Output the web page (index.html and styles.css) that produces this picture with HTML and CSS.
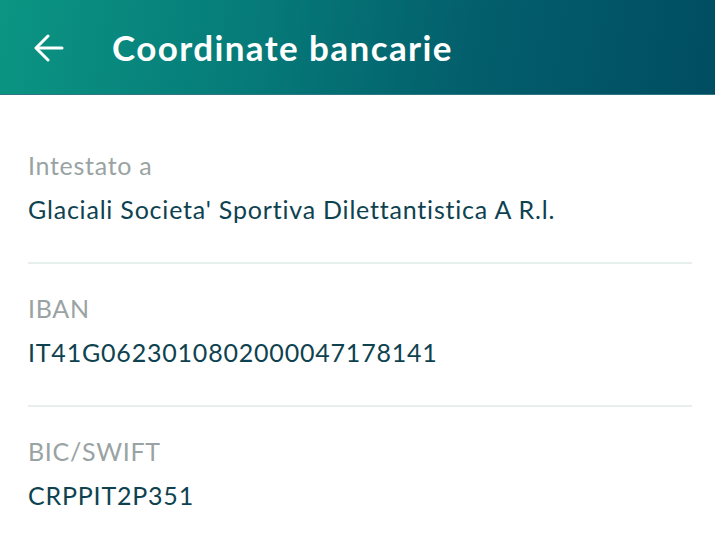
FILE: index.html
```html
<!DOCTYPE html>
<html lang="it">
<head>
<meta charset="utf-8">
<title>Coordinate bancarie</title>
<link rel="stylesheet" href="styles.css">
</head>
<body>
<header class="appbar">
  <button class="back" aria-label="Indietro">
    <svg width="30" height="28" viewBox="0 0 30 28" fill="none" stroke="#ffffff" stroke-width="3" stroke-linecap="round" stroke-linejoin="round">
      <path d="M28 14H3"/>
      <path d="M14 2L2 14l12 12"/>
    </svg>
  </button>
  <h1 class="title">Coordinate bancarie</h1>
</header>
<main class="content">
  <section class="field first">
    <div class="label">Intestato a</div>
    <div class="value">Glaciali Societa' Sportiva Dilettantistica A R.l.</div>
  </section>
  <section class="field">
    <div class="label">IBAN</div>
    <div class="value">IT41G0623010802000047178141</div>
  </section>
  <section class="field last">
    <div class="label">BIC/SWIFT</div>
    <div class="value">CRPPIT2P351</div>
  </section>
</main>
</body>
</html>
```
FILE: styles.css
```css
* { box-sizing: border-box; }
html, body { margin: 0; padding: 0; background: #ffffff; }
body { font-family: Lato, "Noto Sans", sans-serif; width: 715px; height: 541px; overflow: hidden; }

.appbar {
  height: 95px;
  display: flex;
  align-items: center;
  padding-left: 34px;
  background: linear-gradient(100deg, #0b9583 0%, #067b79 35%, #035f6c 65%, #004d62 100%);
  border-bottom: 1px solid #2f7683;
}
.back {
  background: none;
  border: 0;
  padding: 0;
  width: 30px;
  height: 28px;
  display: flex;
  margin-right: 48px;
  margin-top: 2px;
}
.title {
  margin: 0;
  color: #ffffff;
  font-weight: 700;
  font-size: 35px;
  line-height: 40px;
  letter-spacing: 1.4px;
}

.content { padding: 0 23px 0 28px; }
.field {
  padding: 29px 0 38px;
  border-bottom: 2px solid #e6eeee;
  display: flex;
  flex-direction: column;
  gap: 14px;
}
.field.first { padding-top: 55px; }
.field.last { border-bottom: 0; }
.label {
  color: #9aa3a3;
  font-size: 25px;
  line-height: 30px;
  letter-spacing: 0.7px;
}
.value {
  color: #0e4250;
  font-size: 25px;
  line-height: 30px;
  letter-spacing: 0.8px;
}
```
